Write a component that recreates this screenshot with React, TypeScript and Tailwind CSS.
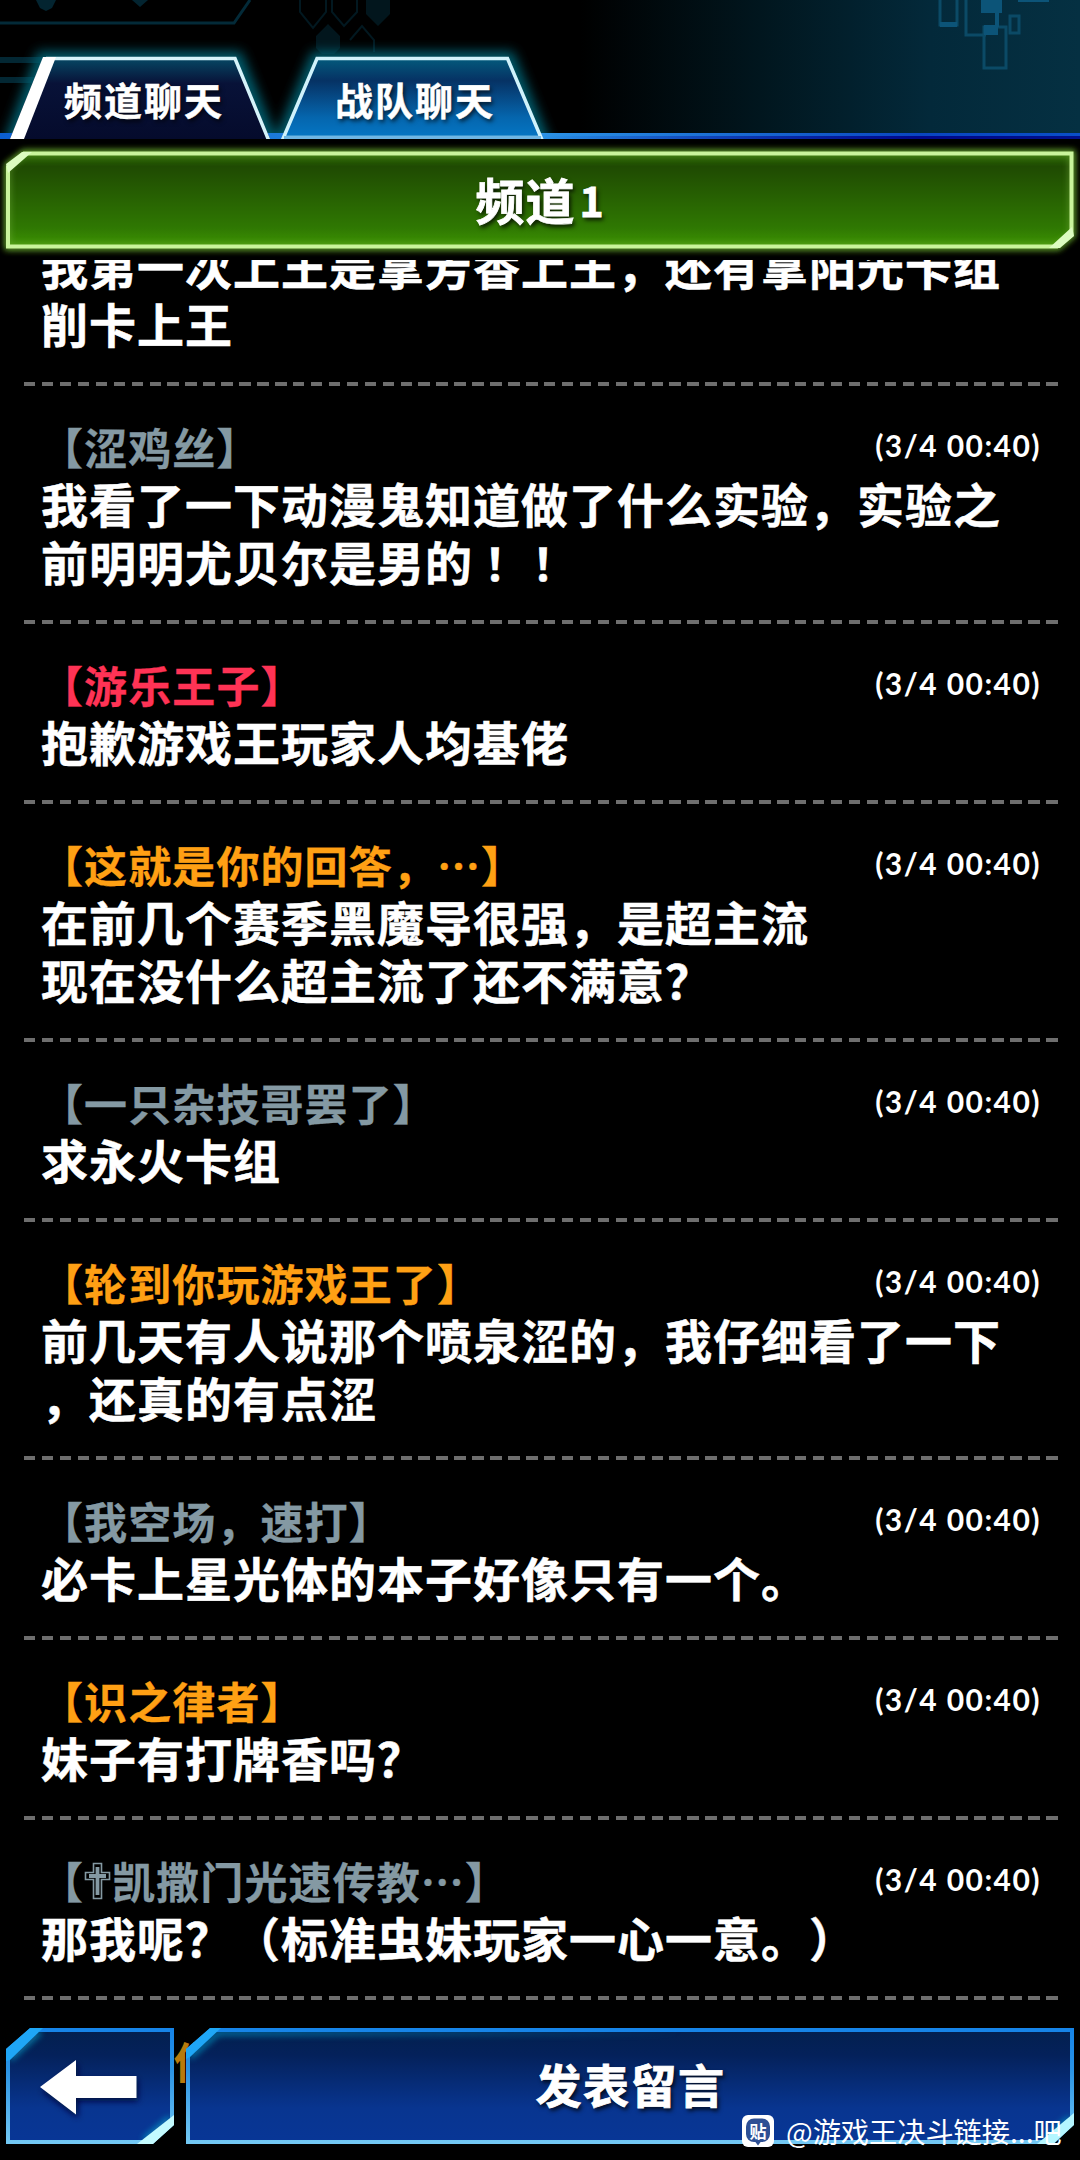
import React from "react";

const CJK = "font-['Noto_Sans_CJK_SC',sans-serif]";

type Message = { name: React.ReactNode; tone: string; lines: React.ReactNode[] };

const GRAY = "text-[#8499a3]";
const ORANGE = "text-[#ffa014]";
const RED = "text-[#ff3355]";

function CrossMark() {
  return (
    <svg viewBox="0 0 28 44" className="inline-block h-[44px] w-[28px] align-top" fill="none" stroke="currentColor">
      <path d="M9.500 6.500h8v9h8v7h-8v19h-8v-19h-8v-7h8z" strokeWidth="1.600" />
      <path d="M13.500 10v28M5 19h17" strokeWidth="3.800" />
    </svg>
  );
}

const messages: Message[] = [
  {
    name: "涩鸡丝",
    tone: GRAY,
    lines: [
      "我看了一下动漫鬼知道做了什么实验，实验之",
      <>前明明尤贝尔是男的<span lang="zh-TW" className="font-['Noto_Sans_CJK_TC',sans-serif] text-[44px] tracking-[4px]">！！</span></>,
    ],
  },
  { name: "游乐王子", tone: RED, lines: ["抱歉游戏王玩家人均基佬"] },
  { name: "这就是你的回答，…", tone: ORANGE, lines: ["在前几个赛季黑魔导很强，是超主流", "现在没什么超主流了还不满意？"] },
  { name: "一只杂技哥罢了", tone: GRAY, lines: ["求永火卡组"] },
  { name: "轮到你玩游戏王了", tone: ORANGE, lines: ["前几天有人说那个喷泉涩的，我仔细看了一下", "，还真的有点涩"] },
  { name: "我空场，速打", tone: GRAY, lines: ["必卡上星光体的本子好像只有一个。"] },
  { name: "识之律者", tone: ORANGE, lines: ["妹子有打牌香吗？"] },
  { name: <><CrossMark />凯撒门光速传教…</>, tone: GRAY, lines: ["那我呢？（标准虫妹玩家一心一意。）"] },
];

function Lines({ lines }: { lines: React.ReactNode[] }) {
  return (
    <div className="pl-[41px] text-[47px] font-bold leading-[58px] tracking-[1px] text-white [-webkit-text-stroke:0.5px_white]">
      {lines.map((l, i) => (
        <p key={i} className="h-[58px] whitespace-nowrap [text-spacing-trim:space-all]">{l}</p>
      ))}
    </div>
  );
}

function Divider() {
  return (
    <div className="ml-6 h-1 w-[1035px] bg-[repeating-linear-gradient(90deg,#6e6e6e_0,#6e6e6e_11.5px,transparent_11.5px,transparent_17.93px)]" />
  );
}

function Item({ m }: { m: Message }) {
  return (
    <li>
      <div className="flex h-[88px] items-start justify-between pl-[40px] pr-[39px] pt-[37px]">
        <span className={`${m.tone} h-[51px] whitespace-nowrap text-[43px] font-bold leading-[46px] tracking-[1.100px] [-webkit-text-stroke:0.3px_currentColor] [text-spacing-trim:space-all]`}>
          【{m.name}】
        </span>
        <time className="whitespace-nowrap font-['Lato',sans-serif] text-[30px] font-bold leading-[44px] tracking-[1.450px] text-white">
          (3/4 00:40)
        </time>
      </div>
      <Lines lines={m.lines} />
      <div className="h-[30px]" />
      <Divider />
    </li>
  );
}

function Header() {
  return (
    <header className="relative h-[139px] overflow-hidden bg-[linear-gradient(90deg,#000_0,#000_580px,#01161e_760px,#03293a_930px,#053042_1080px)]">
      <svg className="absolute inset-0" width="1080" height="139" viewBox="0 0 1080 139">
        <defs>
          <filter id="glow" x="-20%" y="-30%" width="140%" height="160%">
            <feGaussianBlur stdDeviation="6" />
          </filter>
          <linearGradient id="t1" x2="0" y2="1">
            <stop offset="0" stopColor="#064a66" />
            <stop offset=".32" stopColor="#081238" />
            <stop offset="1" stopColor="#050b2c" />
          </linearGradient>
          <linearGradient id="t2" x2="0" y2="1">
            <stop offset="0" stopColor="#035a7c" />
            <stop offset=".28" stopColor="#063264" />
            <stop offset=".75" stopColor="#0566ae" />
            <stop offset="1" stopColor="#0576c4" />
          </linearGradient>
          <linearGradient id="rule">
            <stop offset="0" stopColor="#0b5fd0" />
            <stop offset=".5" stopColor="#2b93e6" />
            <stop offset=".85" stopColor="#0a46c0" />
            <stop offset="1" stopColor="#0a4fc8" />
          </linearGradient>
          <linearGradient id="ruleShade">
            <stop offset=".5" stopColor="#00109a" stopOpacity="0" />
            <stop offset=".85" stopColor="#00088a" />
            <stop offset="1" stopColor="#00108a" />
          </linearGradient>
        </defs>
        <g fill="none" stroke="#032a38" strokeWidth="3">
          <path d="M0 23H234L250 0" />
          <path d="M0 60H120M0 80H40" strokeWidth="6" stroke="#032733" />
          <path d="M300 0v12l13 16 13-16V0M332 0v12l12 14 13-14V0M350 40l12-14 12 14v12" stroke="#021820" strokeWidth="2" />
        </g>
        <g fill="#032430">
          <path d="M36 0h20l-4 8-6 3-6-3zM132 0h16l-8 7z" />
          <path d="M316 36l12-12 12 12v12l-6 6h-12l-6-6zM366 0h24v14l-12 12-12-12z" fill="#02161d" />
        </g>
        <g fill="none" stroke="#0b4a66" strokeWidth="3">
          <path d="M940 0v25h17V0M966 0v35h20M984 27h22v41h-22zM1010 16h9v17h-9z" />
        </g>
        <g fill="#0c5478">
          <path d="M981 0h21v13h-21zM984 25h14v10h-14zM1018 0h31v2h-31zM940 22h17v5h-17zM995 13h4v14h-4z" />
        </g>
        <path d="M43 59H236L270 142H12zM317 59H508L542 142H282z" fill="none" stroke="#065f70" strokeWidth="15" filter="url(#glow)" />
        <rect y="133" width="1080" height="6" fill="url(#rule)" />
        <rect y="136" width="1080" height="3" fill="url(#ruleShade)" />
        <path d="M43 57H236L270 139H10z" fill="url(#t1)" />
        <path d="M46 58.500H235L269 141" fill="none" stroke="#d5f3fa" strokeWidth="3.500" />
        <path d="M43 57H56L24 139H10z" fill="#fff" />
        <path d="M317 58.500H507.500L541 137.500H283.500z" fill="url(#t2)" stroke="#d0f2fb" strokeWidth="3.500" />
        <path d="M284 137.500H541" stroke="#6fb6e4" strokeWidth="3" />
      </svg>
      <nav className="relative flex pl-[10px] pt-[57px] text-[38px] font-bold leading-[84px] tracking-[2px] text-white [-webkit-text-stroke:0.5px_white] [text-shadow:2px_3px_4px_#000a]">
        <span className="w-[271px] pl-[54px]">频道聊天</span>
        <span className="w-[260px] pl-[54px]">战队聊天</span>
      </nav>
    </header>
  );
}

function ChannelBar() {
  return (
    <div className="relative flex h-[121px] items-center justify-center">
      <svg className="absolute inset-0" width="1080" height="121" viewBox="0 139 1080 121">
        <defs>
          <filter id="gg" x="-5%" y="-20%" width="110%" height="140%">
            <feGaussianBlur stdDeviation="3" />
          </filter>
          <linearGradient id="green" x2="0" y2="1">
            <stop offset="0" stopColor="#2c6c04" />
            <stop offset=".14" stopColor="#1f4a02" />
            <stop offset=".8" stopColor="#2f7802" />
            <stop offset="1" stopColor="#3e9404" />
          </linearGradient>
        </defs>
        <path d="M24 153H1072V235L1058 247H8V165z" fill="none" stroke="#4d8a1a" strokeWidth="6" filter="url(#gg)" />
        <path d="M24 153.500H1071.500V235L1057 246.500H8V167z" fill="url(#green)" />
        <path d="M24 153.500H1071.500V235L1057 246.500H8V167z" fill="none" stroke="#76b03a" strokeWidth="6" filter="url(#gg)" opacity=".5" />
        <path d="M24 153.500H1071.500V235L1057 246.500H8V167z" fill="none" stroke="#c9f49c" strokeWidth="4" />
        <path d="M6 164L22 152H32L8 173zM1074 236L1060 248H1049L1072 227z" fill="#dcfcc0" />
      </svg>
      <h1 className="relative -mt-[1px] flex items-center text-[49px] font-bold leading-[60px] tracking-[1px] text-white [-webkit-text-stroke:0.8px_white] [text-shadow:2px_3px_4px_#000c]">
        频道<span className="ml-[4px] text-[41px]">1</span>
      </h1>
    </div>
  );
}

function BlueDefs() {
  return (
    <defs>
      <linearGradient id="blue" x2="0" y2="1">
        <stop offset="0" stopColor="#03204f" />
        <stop offset=".22" stopColor="#04215a" />
        <stop offset=".7" stopColor="#083590" />
        <stop offset="1" stopColor="#083696" />
      </linearGradient>
      <linearGradient id="edge" x2="0" y2="1">
        <stop offset="0" stopColor="#1684e8" />
        <stop offset=".35" stopColor="#2a93e4" />
        <stop offset="1" stopColor="#73c8f4" />
      </linearGradient>
      <linearGradient id="topGlow">
        <stop offset="0" stopColor="#0788b8" />
        <stop offset="1" stopColor="#0788b8" stopOpacity="0" />
      </linearGradient>
      <filter id="bb" x="-50%" y="-50%" width="200%" height="200%">
        <feGaussianBlur stdDeviation="3" />
      </filter>
    </defs>
  );
}

function Footer() {
  return (
    <footer className="relative flex h-[132px] gap-3 pl-[6px]">
      <button className="h-[116px] w-[168px]" aria-label="返回">
        <svg width="168" height="116" viewBox="0 0 168 116">
          <BlueDefs />
          <path d="M25 2H166V96L146 114H2V22z" fill="url(#blue)" />
          <path d="M4 31L34 4M138 112L164 90" stroke="#0aa0c8" strokeWidth="5" filter="url(#bb)" opacity=".8" />
          <path d="M25 2H166V96L146 114H2V22z" fill="none" stroke="url(#edge)" strokeWidth="4" />
          <path d="M24 0H37L4 32L0 33V21z" fill="#1fa6f6" />
          <path d="M168 97L147 116H131L168 87z" fill="#c4fbff" />
          <path d="M36 63L72 35V51H132V73H72V90z" fill="#00103f" filter="url(#bb)" />
          <path d="M34 59L70 32V48H130.500V70H70V86.500z" fill="#fff" />
        </svg>
      </button>
      <button className="relative h-[116px] w-[888px]">
        <svg className="absolute inset-0" width="888" height="116" viewBox="0 0 888 116">
          <path d="M25 2H886V96L867 114H2V22z" fill="url(#blue)" />
          <path d="M4 29L32 5H500" fill="none" stroke="url(#topGlow)" strokeWidth="5" filter="url(#bb)" opacity=".9" />
          <path d="M858 112L884 90" fill="none" stroke="#0788b8" strokeWidth="5" filter="url(#bb)" />
          <path d="M25 2H886V96L867 114H2V22z" fill="none" stroke="url(#edge)" strokeWidth="4" />
          <path d="M24 0H35L4 29L0 31V21z" fill="#1fa6f6" />
          <path d="M888 97L867 116H851L888 85z" fill="#b4f6ff" />
        </svg>
        <span className="relative -top-[3px] block pl-px text-[46px] font-bold leading-[116px] tracking-[1.500px] text-white [-webkit-text-stroke:0.8px_white] [text-shadow:2px_3px_4px_#000c]">
          发表留言
        </span>
      </button>
      <div className="absolute left-[742px] top-[87px] flex items-center text-white">
        <span className="relative flex size-8 items-center justify-center rounded-[6px] bg-white">
          <svg className="absolute inset-0" width="32" height="32" viewBox="0 0 32 32" fill="#2d4f94">
            <rect x="4" y="3.500" width="24" height="23.500" rx="8" />
            <path d="M13 26.500h6l-3 4z" />
          </svg>
          <span className="relative -top-px text-[17px] font-bold leading-none">贴</span>
        </span>
        <span className="ml-[12px] whitespace-nowrap text-[28.200px] leading-8">@游戏王决斗链接...吧</span>
      </div>
    </footer>
  );
}

export default function App() {
  return (
    <div className={`${CJK} flex h-[2160px] w-[1080px] flex-col overflow-hidden bg-black`}>
      <Header />
      <ChannelBar />
      <main className="-mb-[70px] h-[1838px] shrink-0 overflow-hidden">
        <div className="-mt-[24px]">
          <Lines lines={["我第一次上王是拿芳香上王，还有拿阳光卡组", "削卡上王"]} />
          <div className="h-[30px]" />
          <Divider />
          <ul>
            {messages.map((m, i) => (
              <Item key={i} m={m} />
            ))}
          </ul>
          <p className="pl-[174px] pt-[37px] text-[43px] font-bold leading-[46px] text-[#b87a0c]">你</p>
        </div>
      </main>
      <Footer />
    </div>
  );
}
